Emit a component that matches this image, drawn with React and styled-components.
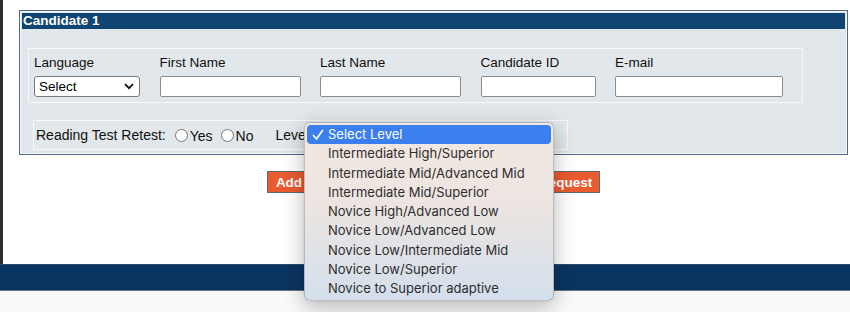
import React from "react";
import styled, { createGlobalStyle } from "styled-components";

const Global = createGlobalStyle`
  html, body { margin: 0; padding: 0; background: #fafafa; }
  body { font-family: "Liberation Sans", Arial, sans-serif; font-size: 13.5px; color: #111; }
  * { box-sizing: border-box; }
`;

const Page = styled.div`
  position: relative;
  width: 850px;
  height: 312px;
  overflow: hidden;
  display: flex;
  flex-direction: column;
`;

const Top = styled.div`
  display: flex;
  background: #fff;
`;

const Strip = styled.div`
  width: 3px;
  flex: none;
  background: #2c2c2c;
`;

const Content = styled.div`
  flex: 1;
  padding: 10px 2px 71px 16px;
  display: flex;
  flex-direction: column;
`;

const Panel = styled.div`
  border: 1px solid #4b6a8c;
  padding: 2px 2px 4px;
  background: #e1e7ea;
  box-shadow: inset 0 0 0 1px #f4f6f7;
`;

const PanelHeader = styled.div`
  height: 16px;
  background: #104472;
  color: #fff;
  font-weight: bold;
  font-size: 13.5px;
  line-height: 16px;
  padding-left: 1px;
`;

const Box = styled.div`
  border: 1px solid #f6f8f9;
  margin-left: ${(p) => p.$ml}px;
  margin-top: ${(p) => p.$mt}px;
  width: ${(p) => p.$w}px;
`;

const FieldGrid = styled.div`
  display: grid;
  grid-template-columns: 106px 141px 141px 115px 168px;
  column-gap: 19.5px;
  padding: 6px 5px 5px;
`;

const Field = styled.div`
  display: flex;
  flex-direction: column;
  gap: 6px;
`;

const Label = styled.span`
  line-height: 15px;
  font-size: 13.5px;
  color: #111;
`;

const TextInput = styled.input`
  height: 21px;
  width: 100%;
  border: 1px solid #8c8c8c;
  border-radius: 2px;
  background: #fff;
  margin: 0;
  font: inherit;
`;

const Select = styled.select`
  appearance: none;
  -webkit-appearance: none;
  height: ${(p) => p.$h || 21}px;
  width: ${(p) => p.$w}px;
  border: 1px solid #7a7a7a;
  border-radius: 3px;
  background: #fff url("data:image/svg+xml;utf8,<svg xmlns='http://www.w3.org/2000/svg' width='10' height='7' viewBox='0 0 10 7'><path d='M1 1.2 L5 5.2 L9 1.2' fill='none' stroke='%23111' stroke-width='1.9'/></svg>") no-repeat right 5px center;
  padding: 0 0 0 4px;
  margin: 0;
  font-family: "Liberation Sans", Arial, sans-serif;
  font-size: 13.5px;
  color: #000;
`;

const RetestRow = styled.div`
  height: 28px;
  display: flex;
  align-items: center;
  padding-left: 2px;
`;

const Text = styled.span`
  font-size: 14px;
  color: #111;
  margin-left: ${(p) => p.$ml || 0}px;
  margin-top: ${(p) => p.$mt || 0}px;
`;

const Radio = styled.span`
  width: 13px;
  height: 13px;
  border-radius: 50%;
  border: 1px solid #777;
  background: #fff;
  margin-left: ${(p) => p.$ml}px;
  margin-right: 2px;
  flex: none;
`;

const LevelSelect = styled(Select)`
  margin-left: 3px;
`;

const Buttons = styled.div`
  display: flex;
  justify-content: center;
  gap: 47px;
  margin-top: 16px;
`;

const Button = styled.button`
  height: 22px;
  width: ${(p) => p.$w}px;
  background: #ea5b30;
  border: 1px solid #5b6b78;
  color: #fff;
  font-family: "Liberation Sans", Arial, sans-serif;
  font-weight: bold;
  font-size: 13.5px;
  padding: 0;
  margin: 0;
  white-space: nowrap;
  overflow: hidden;
`;

const Footer = styled.div`
  height: 27px;
  background: #0a3562;
  border-top: 1px solid #2c4a6c;
  border-bottom: 1px solid #66737d;
`;

const Bottom = styled.div`
  flex: 1;
  background: #fafafa;
`;

const Menu = styled.div`
  position: absolute;
  left: 304px;
  top: 122px;
  width: 250px;
  height: 179px;
  padding: 2px 2px 4px;
  border-radius: 6px;
  border: 0.5px solid rgba(0, 0, 0, 0.18);
  background: linear-gradient(180deg, #f2e8e2 0%, #ede5e1 45%, #d3dfec 100%);
  box-shadow: 0 6px 22px rgba(0, 0, 0, 0.28), 0 0 2px rgba(0, 0, 0, 0.12);
  font-family: Inter, "Liberation Sans", Arial, sans-serif;
`;

const Item = styled.div`
  position: relative;
  height: 19.25px;
  line-height: 19.25px;
  padding-left: 21px;
  font-size: 13px;
  border-radius: 4px;
  color: ${(p) => (p.$active ? "#fff" : "#2e2e2e")};
  background: ${(p) => (p.$active ? "#3b7fee" : "transparent")};
  white-space: nowrap;
`;

const Check = styled.svg`
  position: absolute;
  left: 5px;
  top: 4px;
`;

const levels = [
  "Select Level",
  "Intermediate High/Superior",
  "Intermediate Mid/Advanced Mid",
  "Intermediate Mid/Superior",
  "Novice High/Advanced Low",
  "Novice Low/Advanced Low",
  "Novice Low/Intermediate Mid",
  "Novice Low/Superior",
  "Novice to Superior adaptive",
];

export default function App() {
  return (
    <Page>
      <Global />
      <Top>
        <Strip />
        <Content>
          <Panel>
            <PanelHeader>Candidate 1</PanelHeader>
            <Box $ml={6} $mt={19} $w={775}>
              <FieldGrid>
                <Field>
                  <Label>Language</Label>
                  <Select $w={106} $h={21} defaultValue="s">
                    <option value="s">Select</option>
                  </Select>
                </Field>
                <Field>
                  <Label>First Name</Label>
                  <TextInput />
                </Field>
                <Field>
                  <Label>Last Name</Label>
                  <TextInput />
                </Field>
                <Field>
                  <Label>Candidate ID</Label>
                  <TextInput />
                </Field>
                <Field>
                  <Label>E-mail</Label>
                  <TextInput />
                </Field>
              </FieldGrid>
            </Box>
            <Box $ml={11} $mt={17} $w={535}>
              <RetestRow>
                <Text>Reading Test Retest:</Text>
                <Radio $ml={9} />
                <Text $mt={2}>Yes</Text>
                <Radio $ml={8} />
                <Text $mt={2}>No</Text>
                <Text $ml={22}>Level</Text>
                <LevelSelect $w={240} $h={20} defaultValue="s">
                  <option value="s">Select Level</option>
                </LevelSelect>
              </RetestRow>
            </Box>
          </Panel>
          <Buttons>
            <Button $w={168}>Add Another Candidate</Button>
            <Button $w={118}>Submit Request</Button>
          </Buttons>
        </Content>
      </Top>
      <Footer />
      <Bottom />
      <Menu>
        {levels.map((l, i) => (
          <Item key={l} $active={i === 0}>
            {i === 0 && (
              <Check width="12" height="12" viewBox="0 0 12 12">
                <path d="M1.5 6.5 L4.5 10 L10.5 1.5" fill="none" stroke="#fff" strokeWidth="1.7" strokeLinecap="round" strokeLinejoin="round" />
              </Check>
            )}
            {l}
          </Item>
        ))}
      </Menu>
    </Page>
  );
}
